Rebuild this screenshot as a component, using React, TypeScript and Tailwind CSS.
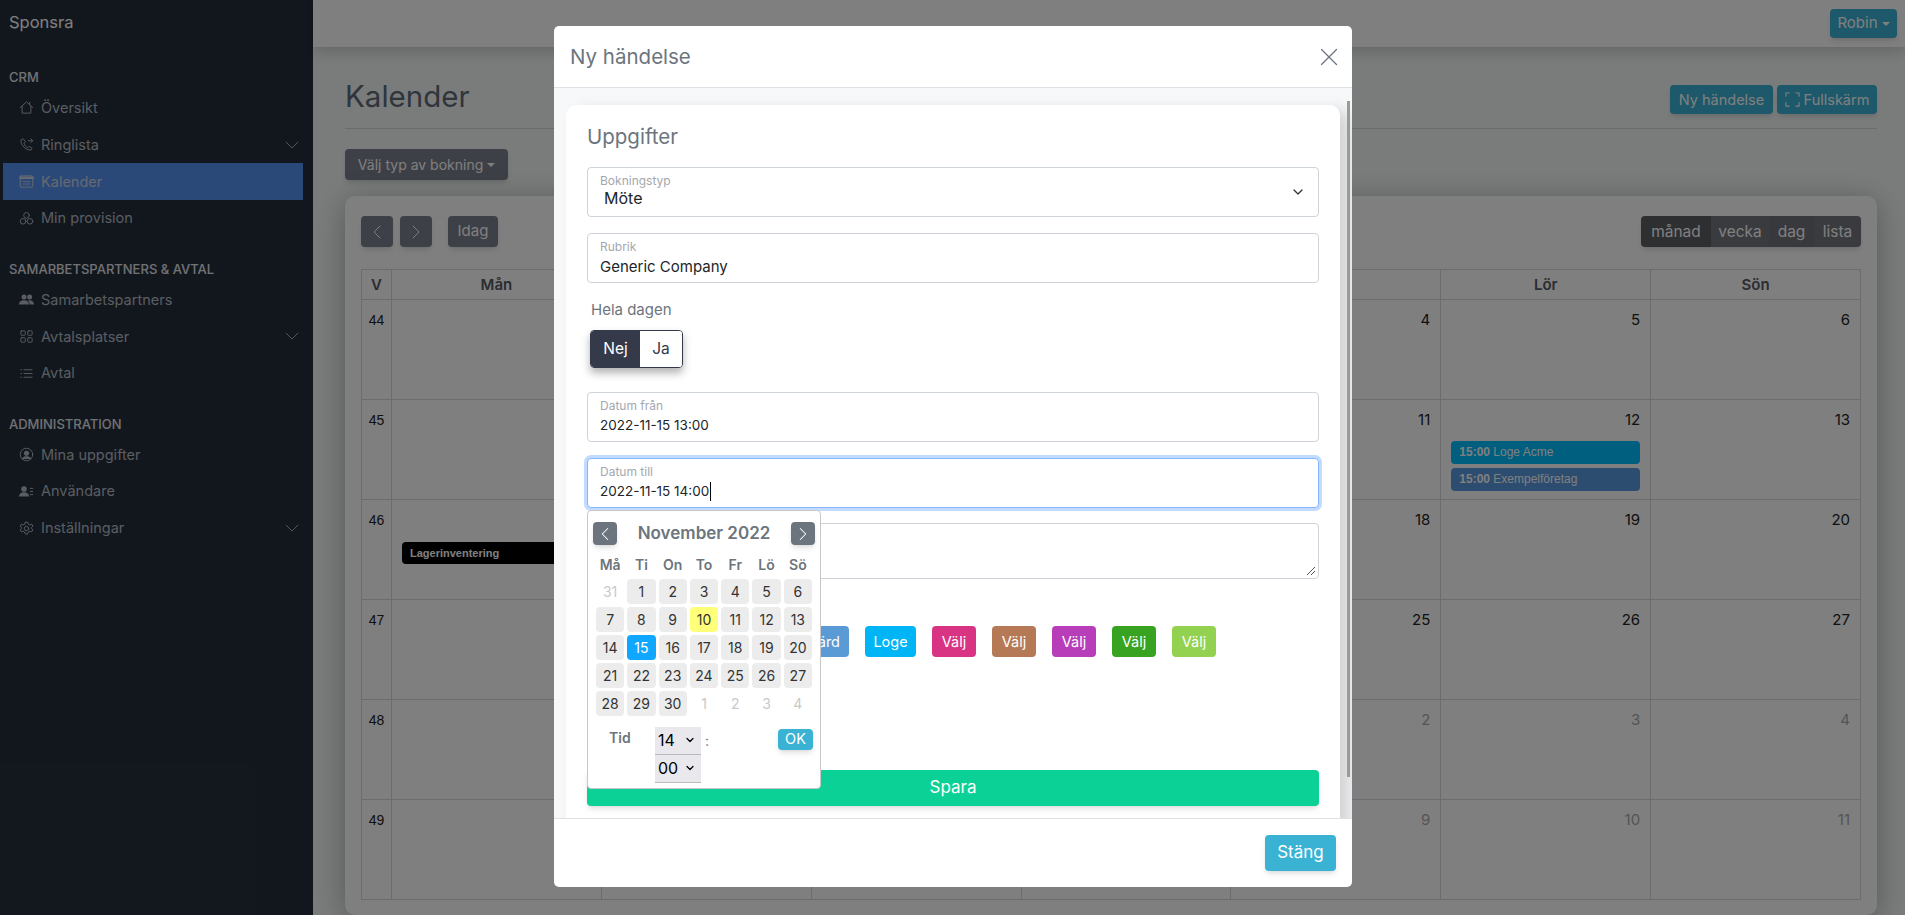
import { ChevronDown, ChevronLeft, ChevronRight, X } from "lucide-react";
import type { ReactNode } from "react";

const poppins = "font-['Inter','Liberation_Sans',sans-serif]";

function Ico({ children }: { children: ReactNode }) {
  return (
    <svg viewBox="0 0 24 24" className="h-[15px] w-[15px] shrink-0" fill="none" stroke="currentColor" strokeWidth="1.5" strokeLinecap="round" strokeLinejoin="round">
      {children}
    </svg>
  );
}

const icons: Record<string, ReactNode> = {
  home: <Ico><path d="M2 12 12 3l10 9M5 10v11h14V10M17 4v3" /></Ico>,
  phone: <Ico><path d="M6 3 3 5c0 8 7 16 16 16l2-3-5-3-2 2c-3-1-5-4-6-7l2-2zM15 6h7M19 3l3 3-3 3" /></Ico>,
  calendar: <Ico><rect x="2" y="3" width="20" height="18" rx="1" /><path d="M2 6h20" strokeWidth="4" /><path d="M7 12h2M11 12h2M15 12h2M7 16h2M11 16h2M15 16h2" /></Ico>,
  boxes: <Ico><circle cx="12" cy="7" r="4.500" /><circle cx="6.500" cy="16.500" r="4.500" /><circle cx="17.500" cy="16.500" r="4.500" /></Ico>,
  people: <Ico><g fill="currentColor" stroke="none"><circle cx="8" cy="8" r="4" /><circle cx="17" cy="8" r="4" /><path d="M0 20c0-5 4-7 8-7s8 2 8 7zM17 20c0-3-1-5-3-6 5-2 10 1 10 6z" /></g></Ico>,
  grid: <Ico><rect x="3" y="3" width="7" height="7" rx="1" /><rect x="14" y="3" width="7" height="7" rx="1" /><rect x="3" y="14" width="7" height="7" rx="1" /><rect x="14" y="14" width="7" height="7" rx="1" /></Ico>,
  list: <Ico><path d="M8 6h13M8 12h13M8 18h13M3 6h1M3 12h1M3 18h1" /></Ico>,
  user: <Ico><circle cx="12" cy="12" r="10" /><circle cx="12" cy="10" r="3.500" fill="currentColor" /><path d="M5 19c2-5 12-5 14 0" fill="currentColor" /></Ico>,
  users: <Ico><g fill="currentColor" stroke="none"><circle cx="8" cy="8" r="4.500" /><path d="M0 20c0-5 4-7 8-7s8 2 8 7z" /></g><path d="M18 7h4M18 12h4M18 17h4" /></Ico>,
  gear: <Ico><circle cx="12" cy="12" r="3.500" /><path d="M10 2h4l.7 3 2.700 1.300 2.800-1.400 2 3.400-2.300 2 .1 1.700 2.200 2-2 3.400-2.800-1.200-2.700 1.500-.7 3h-4l-.7-3-2.700-1.500-2.800 1.200-2-3.400 2.200-2 .1-1.700-2.300-2 2-3.400 2.800 1.400L9.300 5z" /></Ico>,
};

const nav = [
  {
    title: "CRM",
    items: [
      { label: "Översikt", icon: "home" },
      { label: "Ringlista", icon: "phone", more: true },
      { label: "Kalender", icon: "calendar", active: true },
      { label: "Min provision", icon: "boxes" },
    ],
  },
  {
    title: "SAMARBETSPARTNERS & AVTAL",
    items: [
      { label: "Samarbetspartners", icon: "people" },
      { label: "Avtalsplatser", icon: "grid", more: true },
      { label: "Avtal", icon: "list" },
    ],
  },
  {
    title: "ADMINISTRATION",
    items: [
      { label: "Mina uppgifter", icon: "user" },
      { label: "Användare", icon: "users" },
      { label: "Inställningar", icon: "gear", more: true },
    ],
  },
];

function Sidebar() {
  return (
    <aside className="flex h-full w-[313px] shrink-0 flex-col bg-[#252e3c] pl-[3px] pr-[10px]">
      <div className="pl-[6px] pt-[12px] text-[16.500px] leading-5 text-white">Sponsra</div>
      {nav.map((section, idx) => (
        <div key={section.title} className={idx === 0 ? "mt-[35px]" : "mt-[22px]"}>
          <div className="mb-[2.500px] pl-[6px] text-[13px] font-medium leading-5 text-[#e2e4e8]">{section.title}</div>
          {section.items.map((item) => (
            <div
              key={item.label}
              className={`flex h-[36.800px] items-center gap-[7px] pl-[16px] text-[14.500px] ${item.active ? "bg-[#5590f0] text-[#ccd4e2]" : "text-[#b4bac2]"}`}
            >
              {icons[item.icon]}
              <span className="flex-1">{item.label}</span>
              {item.more && <ChevronDown className="-mr-px h-6 w-6" strokeWidth={0.9} />}
            </div>
          ))}
        </div>
      ))}
    </aside>
  );
}

const weeks = [
  { v: 44, days: ["", "", "", "", "4", "5", "6"] },
  { v: 45, days: ["", "", "", "", "11", "12", "13"] },
  { v: 46, days: ["", "", "", "", "18", "19", "20"] },
  { v: 47, days: ["", "", "", "", "25", "26", "27"] },
  { v: 48, days: ["", "", "", "", "2", "3", "4"], dim: true },
  { v: 49, days: ["", "", "", "", "9", "10", "11"], dim: true },
];

const heads = ["Mån", "Tis", "Ons", "Tor", "Fre", "Lör", "Sön"];

function CalendarCard() {
  return (
    <div className="mt-4 flex-1 rounded-[10px] bg-white px-4 pt-5 shadow-[0_5px_30px_rgba(0,0,0,0.3)]">
      <div className="flex items-center text-white">
        <button className="flex h-[31px] w-8 items-center justify-center rounded-[4px] bg-[#7a808c] shadow-md"><ChevronLeft className="h-6 w-6" strokeWidth={1} /></button>
        <button className="ml-[7px] flex h-[31px] w-8 items-center justify-center rounded-[4px] bg-[#7a808c] shadow-md"><ChevronRight className="h-6 w-6" strokeWidth={1} /></button>
        <button className="ml-4 h-[31px] w-[50px] rounded-[4px] bg-[#7a808c] text-[15px] shadow-md">Idag</button>
        <div className="ml-auto flex h-[31px] overflow-hidden rounded-[4px] text-[15.500px] shadow-md">
          <span className="flex w-[70px] items-center justify-center bg-[#5a5e63]">månad</span>
          <span className="flex w-[58px] items-center justify-center bg-[#73777f]">vecka</span>
          <span className="flex w-[45px] items-center justify-center bg-[#6e727a]">dag</span>
          <span className="flex w-[47px] items-center justify-center bg-[#73777f]">lista</span>
        </div>
      </div>
      <div className="mt-[22px] grid grid-cols-[30px_repeat(7,1fr)] border-l border-t border-[#d9d9d9] text-[#222]">
        <div className="flex h-[30px] items-center justify-center border-b border-r border-[#d9d9d9] pt-[2px] text-[15px] font-semibold text-[#555a64]">V</div>
        {heads.map((h) => (
          <div key={h} className="flex h-[30px] items-center justify-center border-b border-r border-[#d9d9d9] pt-[2px] text-[15px] font-semibold text-[#555a64]">{h}</div>
        ))}
        {weeks.map((w) => (
          <div key={w.v} className="contents">
            <div className="h-[100px] border-b border-r border-[#d9d9d9] pt-[11px] text-center font-['Liberation_Sans',sans-serif] text-[14px] leading-[18px]">{w.v}</div>
            {w.days.map((d, i) => (
              <div key={i} className={`h-[100px] border-b border-r border-[#d9d9d9] px-[10px] pt-[11px] text-right text-[15px] leading-[18px] ${w.dim ? "text-[#aaa]" : ""}`}>
                {d}
                {w.v === 46 && i === 0 && (
                  <div className="mt-[31px] rounded-[4px] bg-black px-2 py-1 text-left font-['Liberation_Sans',sans-serif] text-[11px] font-bold leading-[14px] text-white">Lagerinventering</div>
                )}
                {w.v === 45 && i === 5 && (
                  <div className="mt-[12px] flex flex-col gap-1 text-left font-['Liberation_Sans',sans-serif] text-[12px] leading-[15px] text-white">
                    <div className="rounded-[4px] bg-[#00bdfd] px-2 py-1"><b>15:00</b> Loge Acme</div>
                    <div className="rounded-[4px] bg-[#5a9ae0] px-2 py-1"><b>15:00</b> Exempelföretag</div>
                  </div>
                )}
              </div>
            ))}
          </div>
        ))}
      </div>
    </div>
  );
}

function Page() {
  return (
    <div className="flex min-w-0 flex-1 flex-col bg-[#f5f8f8]">
      <header className="z-10 flex h-[47px] shrink-0 items-center justify-end bg-white pr-2 shadow-[0_4px_16px_rgba(0,0,0,0.2)]">
        <button className="flex h-[29px] w-[67px] items-center justify-center gap-1 rounded-[4px] bg-[#3ab2d4] text-[15px] text-white shadow-md">
          Robin<span className="h-0 w-0 border-x-4 border-t-4 border-x-transparent border-t-current" />
        </button>
      </header>
      <div className="flex min-h-0 flex-1 flex-col pl-8 pr-7">
        <div className="flex h-[82px] shrink-0 items-end justify-between border-b border-[#d4d6d8] pb-[14px] pt-[38px]">
          <h1 className="pb-[2px] text-[29.500px] leading-8 text-[#606a78]">Kalender</h1>
          <div className="flex gap-1 text-[14.500px] text-white">
            <button className="h-[29px] w-[103px] rounded-[4px] bg-[#3ab2d4] shadow-md">Ny händelse</button>
            <button className="flex h-[29px] w-[100px] items-center justify-center gap-1 rounded-[4px] bg-[#3ab2d4] shadow-md">
              <svg viewBox="0 0 16 16" className="h-[15px] w-[15px]" fill="none" stroke="currentColor" strokeWidth="1.200"><path d="M1 5V1h4M11 1h4v4M15 11v4h-4M5 15H1v-4" /></svg>
              Fullskärm
            </button>
          </div>
        </div>
        <div className="mt-[20px]">
          <button className="flex h-[31px] w-[163px] items-center justify-center gap-1 rounded-[4px] bg-[#7a808c] text-[14px] text-white shadow-md">
            Välj typ av bokning<span className="h-0 w-0 border-x-4 border-t-4 border-x-transparent border-t-current" />
          </button>
        </div>
        <CalendarCard />
      </div>
    </div>
  );
}

function Field({ label, value, size, focus, caret }: { label: string; value: string; size: string; focus?: boolean; caret?: boolean }) {
  return (
    <div className={`h-[50px] rounded-[4px] border bg-white px-3 pt-[5px] ${focus ? "border-[#86b7fe] shadow-[0_0_0_3px_rgba(13,110,253,0.25)]" : "border-[#ced4da]"}`}>
      <div className="text-[12px] leading-[15px] text-[#a3a8ae]">{label}</div>
      <div className={`mt-[3px] flex leading-[19px] text-[#212529] ${size}`}>
        {value}
        {caret && <span className="ml-px h-[19px] w-px bg-black" />}
      </div>
    </div>
  );
}

const prevDays = ["31"];
const nextDays = ["1", "2", "3", "4"];
const monthDays = Array.from({ length: 30 }, (_, i) => i + 1);

function DatePicker() {
  return (
    <div className="absolute left-[33px] top-[422px] z-20 h-[279px] w-[234px] rounded-[4px] border border-[#c8c8c8] bg-white px-[8px] pt-[10px]">
      <div className="flex items-center justify-between">
        <button className="-ml-[3px] flex h-[23px] w-6 items-center justify-center rounded-[4px] bg-[#6c757d] text-white shadow-md"><ChevronLeft className="h-[22px] w-[22px]" strokeWidth={1.1} /></button>
        <span className="text-[17px] font-semibold text-[#6c757d]">November 2022</span>
        <button className="-mr-[3px] flex h-[23px] w-6 items-center justify-center rounded-[4px] bg-[#6c757d] text-white shadow-md"><ChevronRight className="h-[22px] w-[22px]" strokeWidth={1.1} /></button>
      </div>
      <div className="mt-[8px] grid grid-cols-7 gap-[3px] text-center text-[14px]">
        <div className="col-span-7 grid grid-cols-7 gap-[3px]">
          {["Må", "Ti", "On", "To", "Fr", "Lö", "Sö"].map((d) => (
            <div key={d} className="h-[21px] font-semibold leading-5 text-[#6c757d]">{d}</div>
          ))}
        </div>
        {prevDays.map((d) => (
          <div key={d} className="flex h-[25px] items-center justify-center text-[#c9c9c9]">{d}</div>
        ))}
        {monthDays.map((d) => (
          <div
            key={d}
            className={`flex h-[25px] items-center justify-center rounded-[4px] ${d === 15 ? "bg-[#0fa7ff] text-white" : d === 10 ? "bg-[#ffff7a] text-[#333]" : "bg-[#ececec] text-[#333]"}`}
          >
            {d}
          </div>
        ))}
        {nextDays.map((d) => (
          <div key={d} className="flex h-[25px] items-center justify-center text-[#c9c9c9]">{d}</div>
        ))}
      </div>
      <div className="mt-[11px] flex">
        <span className="w-[59px] pl-[13px] pt-[1px] text-[14px] font-semibold leading-5 text-[#6c757d]">Tid</span>
        <div className="flex w-[46px] flex-col">
          {["14", "00"].map((t) => (
            <div key={t} className="flex h-[28px] items-center justify-between border-b border-[#bbb] bg-[#e9e9ed] pl-[3px] pr-[5px] text-[16px] text-black">
              {t}
              <ChevronDown className="h-3 w-3" strokeWidth={2.500} />
            </div>
          ))}
        </div>
        <span className="ml-[4px] pt-[4px] text-[14px] leading-5 text-[#6c757d]">:</span>
        <button className="-mr-px ml-auto mt-[2px] h-[21px] w-[35px] rounded-[4px] bg-[#3ab2d4] text-[14.500px] leading-none text-white shadow-md">OK</button>
      </div>
    </div>
  );
}

const chips = [
  { label: "Gärd", bg: "bg-[#5b9bd5]", w: "w-[60px] justify-end pr-[9px]" },
  { label: "Loge", bg: "bg-[#00b5f5]", w: "w-[51px] justify-center" },
  { label: "Välj", bg: "bg-[#d93384]", w: "w-[44px] justify-center" },
  { label: "Välj", bg: "bg-[#b57a55]", w: "w-[44px] justify-center" },
  { label: "Välj", bg: "bg-[#b83db8]", w: "w-[44px] justify-center" },
  { label: "Välj", bg: "bg-[#37a321]", w: "w-[44px] justify-center" },
  { label: "Välj", bg: "bg-[#93d150]", w: "w-[44px] justify-center" },
];

function Modal() {
  return (
    <div className="absolute inset-0 z-30 bg-black/50">
      <div className="absolute left-[554px] top-[26px] flex h-[861px] w-[798px] flex-col overflow-hidden rounded-[5px] bg-white">
        <div className="flex h-[62px] shrink-0 items-center justify-between border-b border-[#dee2e6] pl-4 pr-[8px]">
          <h2 className="pt-[2px] text-[20.500px] text-[#6c757d]">Ny händelse</h2>
          <X className="h-[30px] w-[30px] text-[#6c757d]" strokeWidth={1} />
        </div>
        <div className="relative min-h-0 flex-1 overflow-hidden bg-[#f7f8fa] pl-3 pr-3 pt-[17px]">
          <div className="h-[800px] rounded-[10px] bg-white px-[21px] shadow-[10px_5px_15px_rgba(0,0,0,0.15)]">
            <h3 className="pt-[18px] text-[20.500px] leading-7 text-[#6c757d]">Uppgifter</h3>
            <div className="mt-4 flex h-[50px] items-center rounded-[4px] border border-[#ced4da] bg-white pl-3 pr-3">
              <div className="flex-1 pb-[3px]">
                <div className="text-[12px] leading-[15px] text-[#a3a8ae]">Bokningstyp</div>
                <div className="ml-1 text-[16px] leading-[20px] text-[#212529]">Möte</div>
              </div>
              <ChevronDown className="h-4 w-4 text-[#343a40]" strokeWidth={2} />
            </div>
            <div className="mt-4"><Field label="Rubrik" value="Generic Company" size="text-[15px]" /></div>
            <div className="mt-[17px] pl-[4px] text-[15px] leading-5 text-[#6c757d]">Hela dagen</div>
            <div className="ml-[3px] mt-[10px] flex h-[38px] w-[93px] overflow-hidden rounded-[4px] border border-[#343a4a] text-[15.500px] shadow-[0_5px_8px_rgba(0,0,0,0.3)]">
              <span className="flex w-[49px] items-center justify-center bg-[#343a4a] text-white">Nej</span>
              <span className="flex flex-1 items-center justify-center bg-white text-[#343a4a]">Ja</span>
            </div>
            <div className="mt-[24px]"><Field label="Datum från" value="2022-11-15 13:00" size="text-[13.500px]" /></div>
            <div className="mt-4"><Field label="Datum till" value="2022-11-15 14:00" size="text-[13.500px]" focus caret /></div>
            <div className="relative mt-[15px] h-[56px] rounded-[4px] border border-[#ced4da] bg-white">
              <svg viewBox="0 0 12 12" className="absolute bottom-[2px] right-[2px] h-3 w-3" stroke="#555" strokeWidth="1"><path d="M11 3 3 11M11 7l-4 4" /></svg>
            </div>
            <div className="mt-[47px] flex h-[31px] gap-4 pl-[202px] text-[14.500px] text-white">
              {chips.map((c, i) => (
                <span key={i} className={`flex items-center rounded-[4px] ${c.bg} ${c.w}`}>{c.label}</span>
              ))}
            </div>
            <button className="mt-[113px] h-[36px] w-full rounded-[4px] bg-[#0cd197] text-[17px] text-white shadow-md">Spara</button>
          </div>
          <DatePicker />
          <div className="absolute bottom-[41px] right-[2px] top-[13px] w-[3px] bg-[#9a9a9a]" />
        </div>
        <div className="flex h-[69px] shrink-0 items-start justify-end border-t border-[#dee2e6] pr-4 pt-[16px]">
          <button className="h-[36px] w-[71px] rounded-[4px] bg-[#3ab2d4] text-[17px] text-white shadow-md">Stäng</button>
        </div>
      </div>
    </div>
  );
}

export default function App() {
  return (
    <div className={`relative flex h-[915px] w-[1905px] overflow-hidden ${poppins}`}>
      <Sidebar />
      <Page />
      <Modal />
    </div>
  );
}
